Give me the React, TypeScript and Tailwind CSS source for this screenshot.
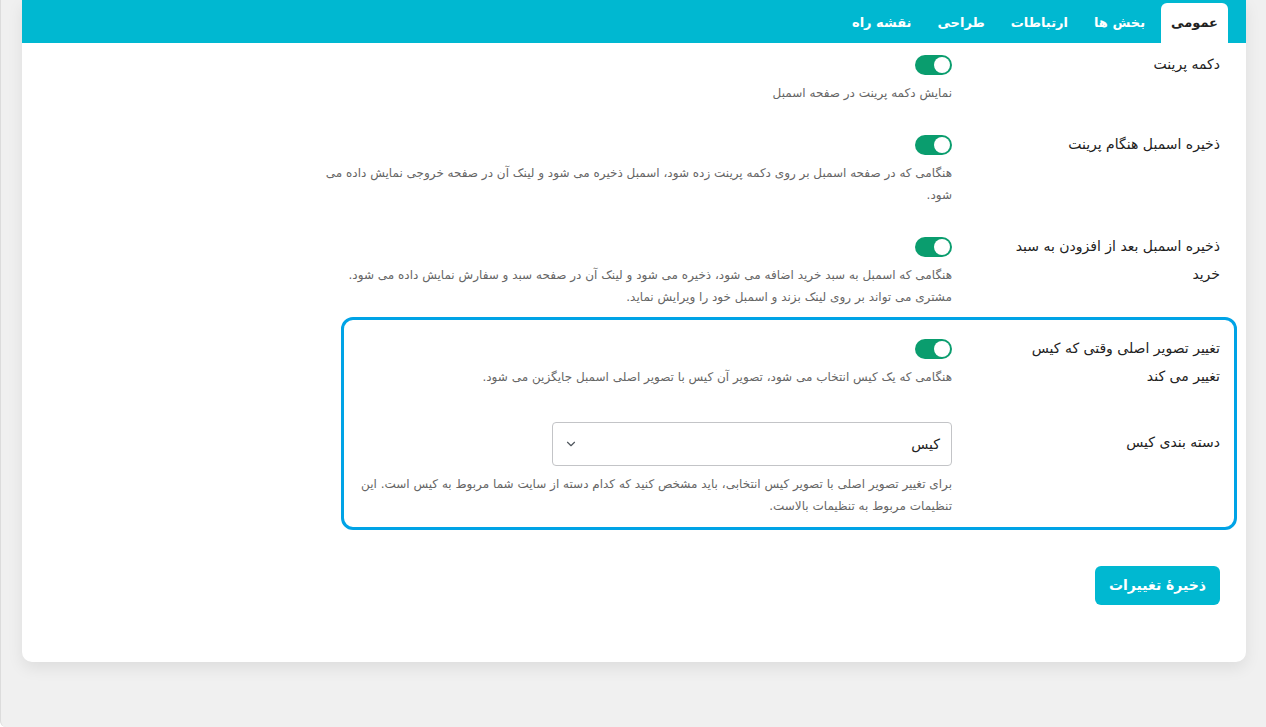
import { ChevronDown } from 'lucide-react';

const tabs = ['عمومی', 'بخش ها', 'ارتباطات', 'طراحی', 'نقشه راه'];

const Toggle = () => (
  <div className="w-[37px] h-[20px] rounded-full bg-[#0a9d6e] flex items-center justify-start px-[2px]">
    <div className="w-[16px] h-[16px] rounded-full bg-white" />
  </div>
);

const Row = ({
  label,
  children,
  labelClass = '',
  className = '',
}: {
  label: string;
  children: React.ReactNode;
  labelClass?: string;
  className?: string;
}) => (
  <div className={`flex ${className}`}>
    <div className={`w-[268px] shrink-0 pl-[58px] text-[14px] leading-[28px] text-[#222] ${labelClass}`}>
      {label}
    </div>
    <div className="flex-1 min-w-0">{children}</div>
  </div>
);

const Desc = ({ children }: { children: React.ReactNode }) => (
  <p className="mt-[7px] text-[12px] leading-[22px] text-[#666]">{children}</p>
);

export default function App() {
  return (
    <div
      dir="rtl"
      className="min-h-[727px] bg-[#f0f0f0] border-l border-[#dcdcdc] rounded-bl-md"
      style={{ fontFamily: '"DejaVu Sans", "Noto Sans", sans-serif' }}
    >
      <div className="pr-[20px] pl-[21px]">
        <div className="bg-white rounded-b-[10px] shadow-[0_6px_16px_rgba(0,0,0,0.08)] pb-[57px]">
          <div className="h-[43px] bg-[#00b8d1] flex items-end gap-[6px] pr-[18px]">
            {tabs.map((t, i) => (
              <div
                key={t}
                className={`h-[40px] px-[10px] flex items-center text-[13px] font-bold rounded-t-md ${
                  i === 0 ? 'bg-white text-[#222]' : 'text-white'
                }`}
              >
                {t}
              </div>
            ))}
          </div>

          <div className="pt-[7px] mr-[9px] w-[913px]">
            <div className="pr-[17px] flex flex-col gap-[26px]">
              <Row label="دکمه پرینت">
                <div className="pt-[5px]">
                  <Toggle />
                  <Desc>نمایش دکمه پرینت در صفحه اسمبل</Desc>
                </div>
              </Row>
              <Row label="ذخیره اسمبل هنگام پرینت">
                <div className="pt-[5px]">
                  <Toggle />
                  <Desc>
                    هنگامی که در صفحه اسمبل بر روی دکمه پرینت زده شود، اسمبل ذخیره می شود و لینک آن در صفحه خروجی نمایش داده می شود.
                  </Desc>
                </div>
              </Row>
              <Row label="ذخیره اسمبل بعد از افزودن به سبد خرید">
                <div className="pt-[5px]">
                  <Toggle />
                  <Desc>
                    هنگامی که اسمبل به سبد خرید اضافه می شود، ذخیره می شود و لینک آن در صفحه سبد و سفارش نمایش داده می شود.
                    <br />
                    مشتری می تواند بر روی لینک بزند و اسمبل خود را ویرایش نماید.
                  </Desc>
                </div>
              </Row>
            </div>

            <div className="mt-[9px] w-[896px] border-[3px] border-[#00a3e6] rounded-[12px] pr-[14px] pl-[3px] pt-[14px] pb-[10px]">
              <Row label="تغییر تصویر اصلی وقتی که کیس تغییر می کند">
                <div className="pt-[5px]">
                  <Toggle />
                  <Desc>هنگامی که یک کیس انتخاب می شود، تصویر آن کیس با تصویر اصلی اسمبل جایگزین می شود.</Desc>
                </div>
              </Row>
              <Row label="دسته بندی کیس" labelClass="pt-[6px]" className="mt-[32px]">
                <div>
                  <div className="w-[400px] h-[44px] border border-[#c3c4c7] rounded-[4px] flex items-center justify-between px-[11px] text-[14px] text-[#222]">
                    <span>کیس</span>
                    <ChevronDown className="w-[14px] h-[14px] text-[#50575e]" strokeWidth={2} />
                  </div>
                  <Desc>
                    برای تغییر تصویر اصلی با تصویر کیس انتخابی، باید مشخص کنید که کدام دسته از سایت شما مربوط به کیس است. این تنظیمات مربوط به تنظیمات بالاست.
                  </Desc>
                </div>
              </Row>
            </div>

            <div className="pr-[17px] mt-[36px]">
              <button className="h-[39px] px-[14px] rounded-[6px] bg-[#00b8d1] text-white font-bold text-[14px]">
                ذخیرهٔ تغییرات
              </button>
            </div>
          </div>
        </div>
      </div>
    </div>
  );
}
